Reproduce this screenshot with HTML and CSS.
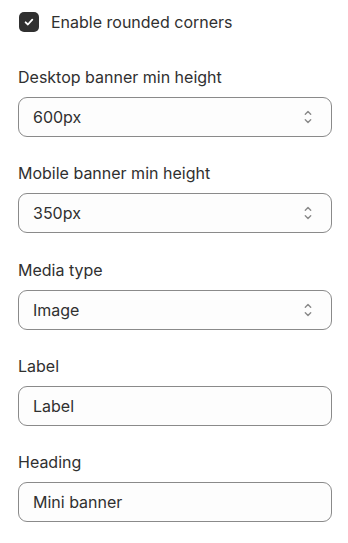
FILE: index.html
```html
<!DOCTYPE html>
<html>
<head>
<meta charset="utf-8">
<link rel="stylesheet" href="styles.css">
</head>
<body>
<div class="panel">
  <label class="check">
    <span class="box">
      <svg width="12" height="12" viewBox="0 0 12 12"><path d="M2.6 6.3 L4.9 8.5 L9.3 3.7" fill="none" stroke="#fff" stroke-width="1.8" stroke-linecap="round" stroke-linejoin="round"/></svg>
    </span>
    <span class="check-text">Enable rounded corners</span>
  </label>

  <div class="field">
    <div class="label">Desktop banner min height</div>
    <div class="input select"><span>600px</span>
      <svg class="chev" width="8" height="16" viewBox="0 0 8 16"><path d="M1.3 5.3 L4 2.6 L6.7 5.3 M1.3 10.7 L4 13.4 L6.7 10.7" fill="none" stroke="#8a8a8a" stroke-width="1.4" stroke-linecap="round" stroke-linejoin="round"/></svg>
    </div>
  </div>

  <div class="field">
    <div class="label">Mobile banner min height</div>
    <div class="input select"><span>350px</span>
      <svg class="chev" width="8" height="16" viewBox="0 0 8 16"><path d="M1.3 5.3 L4 2.6 L6.7 5.3 M1.3 10.7 L4 13.4 L6.7 10.7" fill="none" stroke="#8a8a8a" stroke-width="1.4" stroke-linecap="round" stroke-linejoin="round"/></svg>
    </div>
  </div>

  <div class="field">
    <div class="label">Media type</div>
    <div class="input select"><span>Image</span>
      <svg class="chev" width="8" height="16" viewBox="0 0 8 16"><path d="M1.3 5.3 L4 2.6 L6.7 5.3 M1.3 10.7 L4 13.4 L6.7 10.7" fill="none" stroke="#8a8a8a" stroke-width="1.4" stroke-linecap="round" stroke-linejoin="round"/></svg>
    </div>
  </div>

  <div class="field">
    <div class="label">Label</div>
    <div class="input"><span>Label</span></div>
  </div>

  <div class="field">
    <div class="label">Heading</div>
    <div class="input"><span>Mini banner</span></div>
  </div>
</div>
</body>
</html>
```

FILE: styles.css
```css
html, body {
  margin: 0;
  padding: 0;
  background: #ffffff;
}
body {
  font-family: Inter, "Noto Sans", sans-serif;
  font-size: 16px;
  color: #303030;
}
.panel {
  width: 314px;
  padding: 12px 16px 0 18px;
  display: flex;
  flex-direction: column;
}
.check {
  display: flex;
  align-items: center;
  gap: 12px;
  height: 20px;
  margin-left: 1px;
}
.box {
  width: 20px;
  height: 20px;
  border-radius: 5px;
  background: #303030;
  display: flex;
  align-items: center;
  justify-content: center;
}
.check-text {
  line-height: 20px;
}
.field {
  margin-top: 24.25px;
  display: flex;
  flex-direction: column;
}
.check + .field {
  margin-top: 33px;
}
.label {
  line-height: 24px;
  margin-bottom: 8px;
}
.input {
  height: 40px;
  box-sizing: border-box;
  border: 1px solid #8a8a8a;
  border-radius: 9px;
  background: #fdfdfd;
  display: flex;
  align-items: center;
  justify-content: space-between;
  padding: 0 19px 0 14px;
}
.chev {
  display: block;
}
```
